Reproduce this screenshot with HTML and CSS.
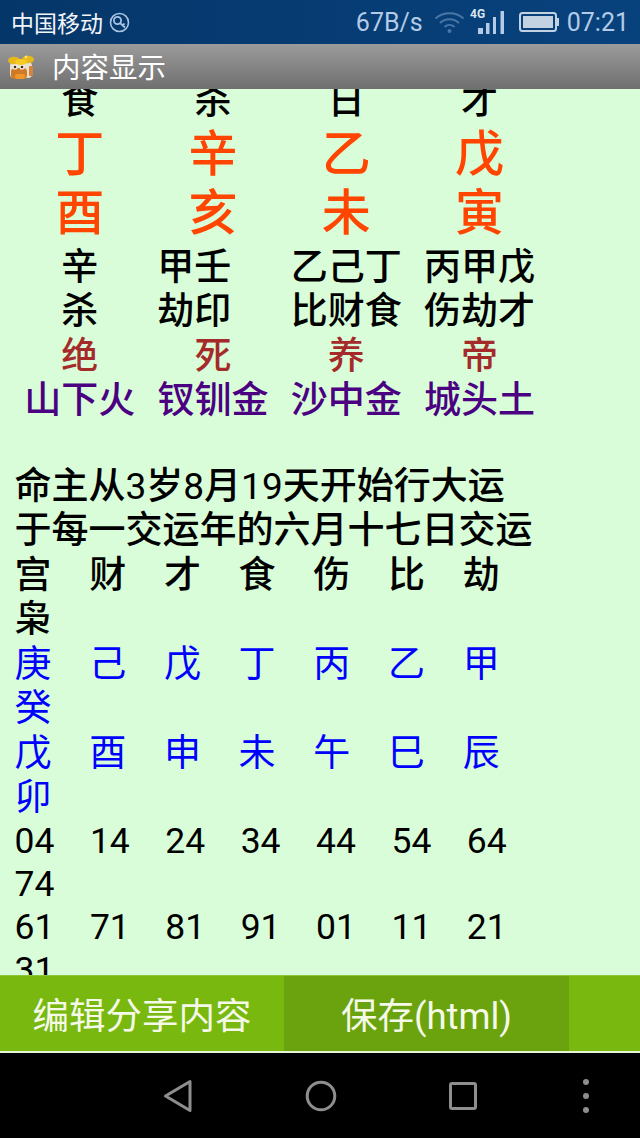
FILE: index.html
```html
<!DOCTYPE html>
<html lang="zh-CN">
<head>
<meta charset="utf-8">
<title>内容显示</title>
<link rel="stylesheet" href="styles.css">
</head>
<body>
<div class="phone">
  <header class="status">
    <div class="carrier">
      <span>中国移动</span>
      <svg class="key" width="21" height="21" viewBox="0 0 21 21"><circle cx="10.500" cy="10.500" r="9" fill="none" stroke="#a9c4e2" stroke-width="1.600"/><circle cx="8.500" cy="8.500" r="3.600" fill="none" stroke="#a9c4e2" stroke-width="1.800"/><path d="M11 11l5 4.500M13.500 13.300l2-1.800" fill="none" stroke="#a9c4e2" stroke-width="1.800"/></svg>
    </div>
    <div class="sys">
      <span class="speed">67B/s</span>
      <svg class="wifi" width="31" height="24" viewBox="0 0 31 24"><g fill="none" stroke="#4a76a6" stroke-width="2"><path d="M1.500 8.500c8-7 20-7 28 0"/><path d="M6 13c5.500-5 13.500-5 19 0"/><path d="M10.500 17c3-2.600 7-2.600 10 0"/></g><circle cx="15.500" cy="21" r="2" fill="#4a76a6"/></svg>
      <svg class="signal" width="35" height="28" viewBox="0 0 35 28"><text x="0" y="10" class="four-g">4G</text><g fill="#b3cbe6"><rect x="8" y="20" width="5" height="6"/><rect x="16" y="15" width="3.500" height="11"/><rect x="23" y="9" width="3" height="17"/><rect x="30.500" y="3" width="3.500" height="23"/></g></svg>
      <svg class="battery" width="40" height="20" viewBox="0 0 40 20"><rect x="1" y="1" width="36" height="18" rx="2.500" fill="none" stroke="#c3d2e3" stroke-width="2"/><rect x="4" y="4" width="30" height="12" fill="#c3d2e3"/><rect x="37.500" y="6" width="2.500" height="8" fill="#c3d2e3"/></svg>
      <span class="time">07:21</span>
    </div>
  </header>
  <div class="titlebar">
    <svg class="app-icon" width="28" height="28" viewBox="0 0 28 28">
      <rect x="3" y="9" width="22" height="16" rx="4" fill="#e8e0cc"/>
      <rect x="4" y="15" width="16" height="11" rx="4" fill="#cf7a26"/>
      <rect x="8" y="21" width="10" height="5" rx="2" fill="#f0962c"/>
      <circle cx="8" cy="14" r="2.600" fill="#f3efe3"/><circle cx="15" cy="14" r="2.600" fill="#f3efe3"/>
      <circle cx="8" cy="14" r="1.300" fill="#3a2a18"/><circle cx="15" cy="14" r="1.300" fill="#3a2a18"/>
      <rect x="22" y="13" width="4" height="10" rx="1" fill="#d9833a"/>
      <ellipse cx="7" cy="7.500" rx="6" ry="3.800" fill="#e8b71c"/><ellipse cx="21" cy="6.500" rx="6" ry="3.800" fill="#e8b71c"/><ellipse cx="14" cy="9" rx="6" ry="3" fill="#f5cb22"/><circle cx="19" cy="4" r="1.500" fill="#fbe36a"/>
    </svg>
    <span class="title">内容显示</span>
  </div>
  <main class="content">
    <div class="chart">
      <div class="row"><span>食</span><span>杀</span><span>日</span><span>才</span></div>
      <div class="row big"><span>丁</span><span>辛</span><span>乙</span><span>戊</span></div>
      <div class="row big last"><span>酉</span><span>亥</span><span>未</span><span>寅</span></div>
      <div class="row"><span>辛</span><span class="left">甲壬</span><span>乙己丁</span><span>丙甲戊</span></div>
      <div class="row"><span>杀</span><span class="left">劫印</span><span>比财食</span><span>伤劫才</span></div>
      <div class="row brown"><span>绝</span><span>死</span><span>养</span><span>帝</span></div>
      <div class="row indigo"><span>山下火</span><span>钗钏金</span><span>沙中金</span><span>城头土</span></div>
    </div>
    <p class="line first">命主从<span class="d">3</span>岁<span class="d">8</span>月<span class="d">19</span>天开始行大运</p>
    <p class="line">于每一交运年的六月十七日交运</p>
    <div class="cells"><span>宫</span><span>财</span><span>才</span><span>食</span><span>伤</span><span>比</span><span>劫</span><span>枭</span></div>
    <div class="cells blue"><span>庚</span><span>己</span><span>戊</span><span>丁</span><span>丙</span><span>乙</span><span>甲</span><span>癸</span></div>
    <div class="cells blue"><span>戊</span><span>酉</span><span>申</span><span>未</span><span>午</span><span>巳</span><span>辰</span><span>卯</span></div>
    <div class="cells nums top"><span>04</span><span>14</span><span>24</span><span>34</span><span>44</span><span>54</span><span>64</span><span>74</span></div>
    <div class="cells nums"><span>61</span><span>71</span><span>81</span><span>91</span><span>01</span><span>11</span><span>21</span><span>31</span></div>
  </main>
  <div class="actions">
    <button class="btn" type="button">编辑分享内容</button>
    <button class="btn dark" type="button">保存(html)</button>
  </div>
  <nav class="navbar">
    <svg class="nav-back" width="30" height="34" viewBox="0 0 30 34"><path d="M27 2.500V31.500L2.500 17z" fill="none" stroke="#8e8e8e" stroke-width="3" stroke-linejoin="round"/></svg>
    <svg class="nav-home" width="32" height="32" viewBox="0 0 32 32"><circle cx="16" cy="16" r="13.800" fill="none" stroke="#8e8e8e" stroke-width="3"/></svg>
    <svg class="nav-recent" width="30" height="30" viewBox="0 0 30 30"><rect x="2.500" y="2.500" width="25" height="25" rx="1.500" fill="none" stroke="#8e8e8e" stroke-width="3"/></svg>
    <svg class="nav-more" width="8" height="36" viewBox="0 0 8 36"><circle cx="4" cy="4" r="3" fill="#8e8e8e"/><circle cx="4" cy="18" r="3" fill="#8e8e8e"/><circle cx="4" cy="32" r="3" fill="#8e8e8e"/></svg>
  </nav>
</div>
</body>
</html>
```
FILE: styles.css
```css
* { box-sizing: border-box; }
html, body { margin: 0; padding: 0; }
body {
  width: 640px;
  height: 1138px;
  overflow: hidden;
  font-family: Roboto, "Noto Sans CJK SC", sans-serif;
}
.phone { display: flex; flex-direction: column; width: 640px; height: 1138px; }

.status {
  flex: none;
  height: 44px;
  display: flex;
  justify-content: space-between;
  align-items: center;
  padding: 0 11px 0 11px;
  background: linear-gradient(90deg, #053669, #08427d);
}
.carrier { display: flex; align-items: center; gap: 6px; color: #f0f4f8; font-size: 23px; }
.key { flex: none; }
.sys { display: flex; align-items: center; color: #b3cbe6; font-size: 25px; }
.speed { margin-right: 11px; }
.wifi { margin-right: 5px; }
.signal { margin-right: 14px; }
.battery { margin-right: 8px; }
.four-g { font: bold 12px Roboto, sans-serif; fill: #dbe6f2; }

.titlebar {
  flex: none;
  height: 45px;
  display: flex;
  align-items: center;
  padding-left: 7px;
  background: linear-gradient(180deg, #9b9b9b, #6f6f6f);
}
.app-icon { margin-right: 17px; }
.title { color: #fff; font-size: 28.500px; position: relative; top: -1px; }

.content {
  flex: none;
  height: 886px;
  overflow: hidden;
  background: #d8fdd8;
  color: #000;
  font-size: 37px;
  font-weight: 500;
}
.chart { margin-top: -9px; padding-left: 13px; }
.row {
  display: grid;
  grid-template-columns: repeat(4, 133.300px);
  height: 44.500px;
  line-height: 44.500px;
  text-align: center;
  white-space: nowrap;
}
.row.big { height: 59px; line-height: 59px; font-size: 49px; color: #ff4500; }
.row.last { margin-bottom: 3px; }
.left { text-align: left; padding-left: 11px; }
.brown { color: #a52a2a; }
.indigo { color: #4b0082; }

.line { margin: 0; padding-left: 14.500px; height: 44.500px; line-height: 44.500px; white-space: nowrap; }
.line.first { margin-top: 41px; }
.d { font-weight: 400; }

.cells {
  display: flex;
  flex-wrap: wrap;
  width: 560px;
  padding-left: 14.500px;
  line-height: 44.500px;
}
.cells span { width: 74.700px; }
.blue { color: #0000ff; font-weight: 400; }
.nums { line-height: 43px; font-size: 35.500px; font-weight: 400; }
.nums.top { margin-top: -1px; }
.nums span { width: 75.400px; }

.actions {
  flex: none;
  height: 76px;
  display: flex;
  background: #78b80f;
  border-top: 1px solid #8cc63a;
}
.btn {
  width: 285px;
  height: 100%;
  padding: 0;
  border: 0;
  background: transparent;
  color: #f4f9e8;
  font: inherit;
  font-size: 36.500px;
}
.btn:first-child { width: 284px; }
.btn.dark { background: #6aa30d; }

.navbar {
  flex: 1;
  border-top: 2px solid #e6f4d4;
  background: #000;
  display: flex;
  align-items: center;
  padding-left: 163px;
}
.nav-home { margin-left: 112px; }
.nav-recent { margin-left: 111px; }
.nav-more { margin-left: 104px; }
```
